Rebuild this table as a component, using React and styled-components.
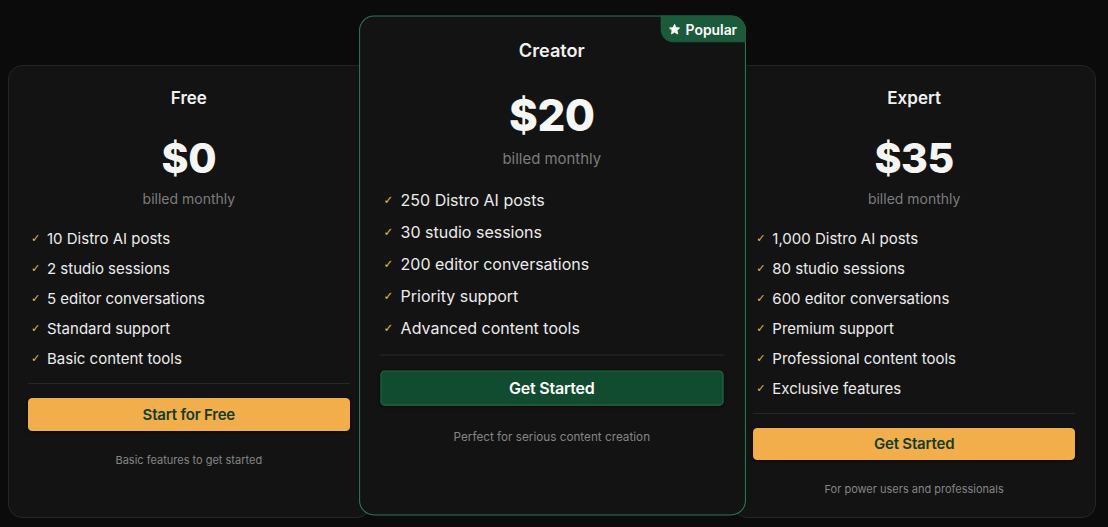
import React from "react";
import styled, { createGlobalStyle } from "styled-components";

const GlobalStyle = createGlobalStyle`
  body {
    margin: 0;
    background: #0b0b0b;
    font-family: "Inter", "Noto Sans", sans-serif;
  }
`;

const Page = styled.div`
  width: 1108px;
  height: 527px;
  box-sizing: border-box;
  padding: 65px 12px 0 8px;
  display: grid;
  grid-template-columns: repeat(3, 1fr);
  align-items: start;
`;

const Card = styled.div`
  position: relative;
  box-sizing: border-box;
  height: ${(p) => (p.featured ? "469px" : "453px")};
  margin-top: ${(p) => (p.featured ? "-34px" : "0")};
  transform: ${(p) => (p.featured ? "scale(1.066)" : "none")};
  z-index: ${(p) => (p.featured ? 2 : 1)};
  background: #131313;
  border: 1px solid ${(p) => (p.featured ? "#2c7650" : "#252525")};
  border-radius: 14px;
  padding: 21px 20px 20px 19px;
  display: flex;
  flex-direction: column;
`;

const Badge = styled.div`
  position: absolute;
  top: -1px;
  right: -1px;
  height: 25px;
  padding: 0 8px 0 7px;
  display: flex;
  align-items: center;
  gap: 4px;
  background: #1b5a3b;
  border-radius: 0 14px 0 12px;
  color: #ffffff;
  font-size: 13px;
  font-weight: 600;
`;

const Title = styled.h3`
  margin: 0;
  text-align: center;
  font-size: 17px;
  line-height: 22px;
  font-weight: 600;
  color: #f1f1f1;
`;

const Price = styled.div`
  margin-top: 24px;
  text-align: center;
  font-size: 41px;
  line-height: 50px;
  font-weight: 800;
  color: #f6f6f6;
  letter-spacing: -0.5px;
`;

const Billed = styled.div`
  margin-top: 6px;
  text-align: center;
  font-size: 14px;
  line-height: 20px;
  color: #7c7c7c;
`;

const Features = styled.ul`
  list-style: none;
  margin: 14px 0 0;
  padding: 0;
`;

const Feature = styled.li`
  height: 30px;
  display: flex;
  align-items: center;
  font-size: 15px;
  color: #ececec;
`;

const Check = styled.span`
  width: 16px;
  padding-left: 3px;
  font-family: "DejaVu Sans", sans-serif;
  font-size: 11px;
  color: #e1c04c;
`;

const Divider = styled.hr`
  margin: 10px 0 0;
  border: none;
  height: 1px;
  background: #282828;
`;

const Button = styled.button`
  margin-top: 14px;
  height: 33px;
  border-radius: 4px;
  border: 1px solid ${(p) => (p.green ? "#236b47" : "#f2ae4b")};
  background: ${(p) => (p.green ? "#114b30" : "#f2ae4b")};
  color: ${(p) => (p.green ? "#ffffff" : "#123d25")};
  font-family: "Inter", "Noto Sans", sans-serif;
  font-size: 15px;
  font-weight: 600;
  letter-spacing: -0.2px;
  box-shadow: 0 1px 3px rgba(0, 0, 0, 0.6);
  cursor: pointer;
`;

const Note = styled.div`
  margin-top: 21px;
  text-align: center;
  font-size: 11px;
  line-height: 16px;
  color: #858585;
`;

const Star = () => (
  <svg width="12" height="12" viewBox="0 0 24 24" fill="#ffffff">
    <path d="M12 2.5l2.9 6.1 6.6.8-4.9 4.6 1.3 6.6L12 17.3l-5.9 3.3 1.3-6.6-4.9-4.6 6.6-.8z" strokeLinejoin="round" stroke="#ffffff" strokeWidth="1.5" />
  </svg>
);

const plans = [
  {
    name: "Free",
    price: "$0",
    features: [
      "10 Distro AI posts",
      "2 studio sessions",
      "5 editor conversations",
      "Standard support",
      "Basic content tools",
    ],
    cta: "Start for Free",
    note: "Basic features to get started",
  },
  {
    name: "Creator",
    price: "$20",
    featured: true,
    features: [
      "250 Distro AI posts",
      "30 studio sessions",
      "200 editor conversations",
      "Priority support",
      "Advanced content tools",
    ],
    cta: "Get Started",
    note: "Perfect for serious content creation",
  },
  {
    name: "Expert",
    price: "$35",
    features: [
      "1,000 Distro AI posts",
      "80 studio sessions",
      "600 editor conversations",
      "Premium support",
      "Professional content tools",
      "Exclusive features",
    ],
    cta: "Get Started",
    note: "For power users and professionals",
  },
];

const App = () => {
  return (
    <>
      <GlobalStyle />
      <Page>
        {plans.map((plan) => (
          <Card key={plan.name} featured={plan.featured}>
            {plan.featured && (
              <Badge>
                <Star />
                Popular
              </Badge>
            )}
            <Title>{plan.name}</Title>
            <Price>{plan.price}</Price>
            <Billed>billed monthly</Billed>
            <Features>
              {plan.features.map((f) => (
                <Feature key={f}>
                  <Check>✓</Check>
                  {f}
                </Feature>
              ))}
            </Features>
            <Divider />
            <Button green={plan.featured}>{plan.cta}</Button>
            <Note>{plan.note}</Note>
          </Card>
        ))}
      </Page>
    </>
  );
};

export default App;
